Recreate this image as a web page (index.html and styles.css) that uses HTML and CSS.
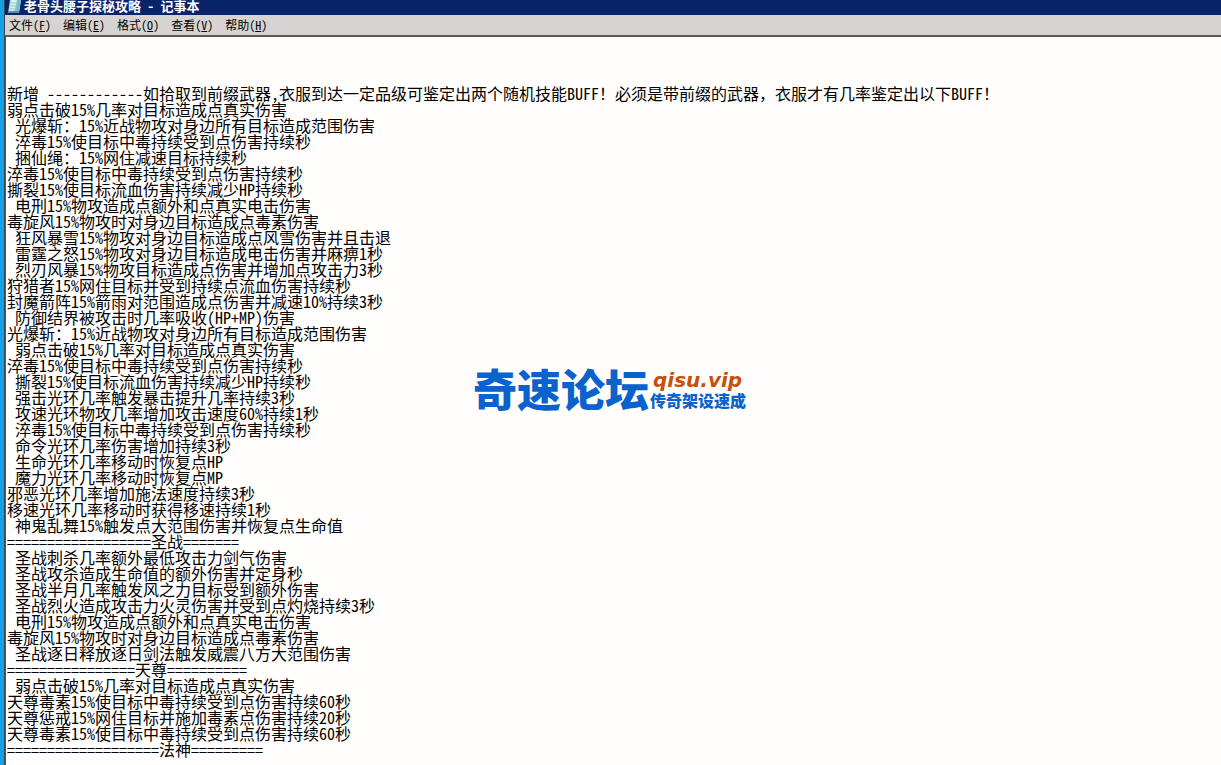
FILE: index.html
```
<!DOCTYPE html>
<html lang="zh-CN">
<head>
<meta charset="utf-8">
<title>老骨头腰子探秘攻略 - 记事本</title>
<link rel="stylesheet" href="styles.css">
</head>
<body>
<div class="window">
  <header class="titlebar">
    <svg class="app-icon" viewBox="0 0 15 14" aria-hidden="true">
      <path d="M3 0H14L12 13H1Z" fill="#a9dbe2"/>
      <path d="M4 0H10L7 11H2Z" fill="#d8f2f3"/>
      <path d="M10 0H14L12 12H8Z" fill="#7dbdcb"/>
      <path d="M1 11H12V13H1Z" fill="#5f8f92"/>
      <path d="M3 3H11M3 6H10M2 9H10" stroke="#8fc9d4" fill="none"/>
    </svg>
    <h1 class="title">老骨头腰子探秘攻略 - 记事本</h1>
  </header>
  <nav class="menubar" aria-label="菜单">
    <button class="menu" type="button">文件(<u>F</u>)</button>
    <button class="menu" type="button">编辑(<u>E</u>)</button>
    <button class="menu" type="button">格式(<u>O</u>)</button>
    <button class="menu" type="button">查看(<u>V</u>)</button>
    <button class="menu" type="button">帮助(<u>H</u>)</button>
  </nav>
  <main class="document">
    <textarea class="editor" aria-label="文本内容" spellcheck="false" wrap="off">



新增 ------------如拾取到前缀武器,衣服到达一定品级可鉴定出两个随机技能BUFF！必须是带前缀的武器，衣服才有几率鉴定出以下BUFF！
弱点击破15%几率对目标造成点真实伤害
 光爆斩：15%近战物攻对身边所有目标造成范围伤害
 淬毒15%使目标中毒持续受到点伤害持续秒
 捆仙绳：15%网住减速目标持续秒
淬毒15%使目标中毒持续受到点伤害持续秒
撕裂15%使目标流血伤害持续减少HP持续秒
 电刑15%物攻造成点额外和点真实电击伤害
毒旋风15%物攻时对身边目标造成点毒素伤害
 狂风暴雪15%物攻对身边目标造成点风雪伤害并且击退
 雷霆之怒15%物攻对身边目标造成电击伤害并麻痹1秒
 烈刃风暴15%物攻目标造成点伤害并增加点攻击力3秒
狩猎者15%网住目标并受到持续点流血伤害持续秒
封魔箭阵15%箭雨对范围造成点伤害并减速10%持续3秒
 防御结界被攻击时几率吸收(HP+MP)伤害
光爆斩：15%近战物攻对身边所有目标造成范围伤害
 弱点击破15%几率对目标造成点真实伤害
淬毒15%使目标中毒持续受到点伤害持续秒
 撕裂15%使目标流血伤害持续减少HP持续秒
 强击光环几率触发暴击提升几率持续3秒
 攻速光环物攻几率增加攻击速度60%持续1秒
 淬毒15%使目标中毒持续受到点伤害持续秒
 命令光环几率伤害增加持续3秒
 生命光环几率移动时恢复点HP
 魔力光环几率移动时恢复点MP
邪恶光环几率增加施法速度持续3秒
移速光环几率移动时获得移速持续1秒
 神鬼乱舞15%触发点大范围伤害并恢复点生命值
==================圣战=======
 圣战刺杀几率额外最低攻击力剑气伤害
 圣战攻杀造成生命值的额外伤害并定身秒
 圣战半月几率触发风之力目标受到额外伤害
 圣战烈火造成攻击力火灵伤害并受到点灼烧持续3秒
 电刑15%物攻造成点额外和点真实电击伤害
毒旋风15%物攻时对身边目标造成点毒素伤害
 圣战逐日释放逐日剑法触发威震八方大范围伤害
================天尊==========
 弱点击破15%几率对目标造成点真实伤害
天尊毒素15%使目标中毒持续受到点伤害持续60秒
天尊惩戒15%网住目标并施加毒素点伤害持续20秒
天尊毒素15%使目标中毒持续受到点伤害持续60秒
===================法神=========</textarea>
    <div class="watermark">
      <span class="brand">奇速论坛</span>
      <div class="brand-side">
        <span class="domain">qisu.vip</span>
        <span class="slogan">传奇架设速成</span>
      </div>
    </div>
  </main>
</div>
</body>
</html>
```
FILE: styles.css
```
* {
  box-sizing: border-box;
}

body {
  margin: 0;
  background: #16a0e8;
  font-family: "Noto Sans Mono CJK SC", "Noto Sans CJK SC", monospace;
}

.window {
  display: flex;
  flex-direction: column;
  min-height: 100vh;
  margin-left: 4px;
  border-left: 1px solid #34494f;
  background: #d6d3d2;
}

.titlebar {
  display: flex;
  align-items: flex-start;
  gap: 2px;
  height: 15px;
  padding-left: 2px;
  background: #0a246a;
}

.app-icon {
  width: 15px;
  height: 14px;
}

.title {
  margin: 0;
  color: #fff;
  font-size: 13px;
  font-weight: 700;
  line-height: 12px;
  white-space: pre;
}

.menubar {
  display: flex;
  gap: 12px;
  height: 20px;
  padding-left: 4px;
}

.menu {
  padding: 0;
  border: 0;
  background: none;
  color: #000;
  font-family: inherit;
  font-size: 12px;
  line-height: 20px;
}

.document {
  position: relative;
  display: flex;
  flex: 1;
  border-top: 2px solid #5c5b52;
  border-left: 1px solid #5c5b52;
}

.editor {
  flex: 1;
  padding: 0 1px;
  border: 0;
  outline: 0;
  resize: none;
  overflow: hidden;
  background: #fffefd;
  color: #000;
  font-family: inherit;
  font-size: 16px;
  font-weight: 300;
  line-height: 16px;
}

.watermark {
  position: absolute;
  top: 329px;
  left: 467px;
  display: flex;
  align-items: center;
  gap: 1px;
  color: #0a62cc;
  font-family: "Noto Sans CJK SC", sans-serif;
  pointer-events: none;
}

.brand {
  font-size: 44px;
  font-weight: 900;
  line-height: 44px;
}

.brand-side {
  display: flex;
  flex-direction: column;
  padding-top: 4px;
}

.domain {
  padding-left: 3px;
  color: #c8500a;
  font-family: "DejaVu Sans", sans-serif;
  font-size: 20px;
  font-style: italic;
  font-weight: 700;
  line-height: 20px;
}

.slogan {
  font-size: 16px;
  font-weight: 900;
  line-height: 20px;
}
```
